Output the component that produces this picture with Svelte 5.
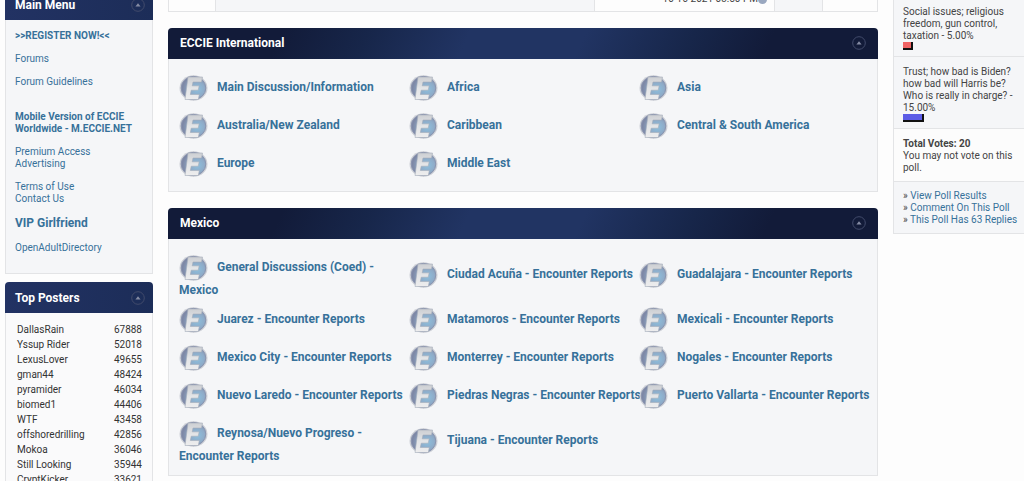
<script>
  const international = [
    'Main Discussion/Information', 'Africa', 'Asia',
    'Australia/New Zealand', 'Caribbean', 'Central & South America',
    'Europe', 'Middle East',
  ];
  const mexico = [
    'General Discussions (Coed) - Mexico', 'Ciudad Acuña - Encounter Reports', 'Guadalajara - Encounter Reports',
    'Juarez - Encounter Reports', 'Matamoros - Encounter Reports', 'Mexicali - Encounter Reports',
    'Mexico City - Encounter Reports', 'Monterrey - Encounter Reports', 'Nogales - Encounter Reports',
    'Nuevo Laredo - Encounter Reports', 'Piedras Negras - Encounter Reports', 'Puerto Vallarta - Encounter Reports',
    'Reynosa/Nuevo Progreso - Encounter Reports', 'Tijuana - Encounter Reports',
  ];
  const sections = [
    { title: 'ECCIE International', forums: international },
    { title: 'Mexico', forums: mexico },
  ];
  const posters = [
    ['DallasRain', 67888], ['Yssup Rider', 52018], ['LexusLover', 49655], ['gman44', 48424],
    ['pyramider', 46034], ['biomed1', 44406], ['WTF', 43458], ['offshoredrilling', 42856],
    ['Mokoa', 36046], ['Still Looking', 35944], ['CryptKicker', 33621],
  ];
</script>

{#snippet toggle(name)}
  <button class="toggle" aria-label="Collapse {name}">
    <svg width="14" height="14" viewBox="0 0 14 14">
      <circle cx="7" cy="7" r="6.3" fill="none" stroke="#424b6b" stroke-width="1" />
      <path d="M4.4 8.5 7 5.3l2.600 3.200z" fill="#858ca4" />
    </svg>
  </button>
{/snippet}

{#snippet badge()}
  <svg class="badge" width="29" height="30" viewBox="0 0 29 30" aria-hidden="true">
    <ellipse cx="14.5" cy="15" rx="14" ry="12.800" fill="#cccfd6" />
    <ellipse cx="14.5" cy="15" rx="12.300" ry="11.600" fill="url(#disc)" stroke="#8a94af" />
    <path d="M9 4h14.500l-1 5H14l-.8 3.800h7l-1 4.400h-7L11.300 21.500h9l-1 5H6z" fill="url(#metal)" stroke="#a5acbb" stroke-width=".6" />
  </svg>
{/snippet}

<svg class="defs" width="0" height="0" aria-hidden="true">
  <defs>
    <radialGradient id="disc" cx=".65" cy=".55" r=".6">
      <stop offset="0" stop-color="#8cc0de" />
      <stop offset=".5" stop-color="#8eabc8" />
      <stop offset="1" stop-color="#7d87a5" />
    </radialGradient>
    <linearGradient id="metal" x1="0" y1="0" x2="0" y2="1">
      <stop offset="0" stop-color="#cdcfd3" />
      <stop offset=".5" stop-color="#e3e5e7" />
      <stop offset="1" stop-color="#ededee" />
    </linearGradient>
  </defs>
</svg>

<div class="page">
  <aside class="left">
    <section>
      <header class="bar"><h2>Main Menu</h2>{@render toggle('Main Menu')}</header>
      <nav class="body menu">
        <p><a class="strong" href="#register">&gt;&gt;REGISTER NOW!&lt;&lt;</a></p>
        <p><a href="#forums">Forums</a></p>
        <p><a href="#guidelines">Forum Guidelines</a></p>
        <p class="spaced"><a class="strong" href="#mobile">Mobile Version of ECCIE Worldwide - M.ECCIE.NET</a></p>
        <p><a href="#premium">Premium Access</a><br /><a href="#ads">Advertising</a></p>
        <p><a href="#terms">Terms of Use</a><br /><a href="#contact">Contact Us</a></p>
        <p class="vip"><a class="strong" href="#vip">VIP Girlfriend</a></p>
        <p><a href="#directory">OpenAdultDirectory</a></p>
      </nav>
    </section>
    <section>
      <header class="bar"><h2>Top Posters</h2>{@render toggle('Top Posters')}</header>
      <div class="body posters">
        <table>
          <tbody>
            {#each posters as [name, count]}
              <tr><td>{name}</td><td class="count">{count}</td></tr>
            {/each}
          </tbody>
        </table>
      </div>
    </section>
  </aside>

  <main>
    <div class="last">
      <div></div>
      <div class="shade"></div>
      <div class="date"><span>10-16-2021 03:50 PM</span><i></i></div>
      <div class="shade"></div>
      <div></div>
    </div>
    {#each sections as section}
      <section>
        <header class="bar wide"><h2>{section.title}</h2>{@render toggle(section.title)}</header>
        <div class="body forums">
          {#each section.forums as forum}
            <div class="forum">{@render badge()}<a href="#forum">{forum}</a></div>
          {/each}
        </div>
      </section>
    {/each}
  </main>

  <aside class="poll">
    <div class="option">Social issues; religious freedom, gun control, taxation - 5.00%<span class="meter red"></span></div>
    <div class="option">Trust; how bad is Biden? how bad will Harris be? Who is really in charge? - 15.00%<span class="meter blue"></span></div>
    <div class="total"><b>Total Votes: 20</b><br />You may not vote on this poll.</div>
    <div class="links">
      » <a href="#results">View Poll Results</a><br />
      » <a href="#comment">Comment On This Poll</a><br />
      » <a href="#replies">This Poll Has 63 Replies</a>
    </div>
  </aside>
</div>

<style>
  :global(body) { background: #fdfdfd; }
  .defs { position: absolute; }
  .page {
    box-sizing: border-box;
    display: grid;
    grid-template-columns: 148px minmax(0, 1fr) 131px;
    gap: 15px;
    align-items: start;
    height: 100vh;
    overflow: hidden;
    padding-left: 5px;
    font: 10px/12px Roboto, sans-serif;
    color: #444;
  }
  a { color: #37719a; text-decoration: none; }
  .left { display: grid; gap: 8px; margin-top: -11px; }
  .bar {
    display: flex;
    align-items: center;
    justify-content: space-between;
    height: 31px;
    box-sizing: border-box;
    padding: 0 8px 0 10px;
    border-radius: 4px 4px 0 0;
    background: linear-gradient(90deg, #223263, #1c2d58);
  }
  .wide {
    padding: 0 12px 1px;
    background: linear-gradient(115deg, #121b39 16%, #17264a 28%, #213463 42%, #213463 58%, #17264a 73%, #121b39 84%);
  }
  h2 { margin: 0; font-size: 12px; line-height: 16px; font-weight: 700; color: #fff; }
  .toggle { display: flex; padding: 0; border: 0; background: none; }
  .body { background: #f5f6f8; border: 1px solid #e3e4e6; border-top: 0; }
  .menu { padding: 10px 9px 19px; }
  .menu p { margin: 0 0 11px; }
  .menu p.spaced { margin-top: 23px; }
  .menu .vip { font-size: 12px; line-height: 15px; }
  .menu p:last-child { margin: 0; }
  .strong { font-weight: 700; }
  .posters { padding: 9px 10px 0 11px; background: #fafafb; }
  table { width: 100%; border-collapse: collapse; }
  td { padding: 0; height: 15px; color: #333; }
  .count { text-align: right; }
  main { display: grid; gap: 16px; }
  .last {
    display: grid;
    grid-template-columns: 46px 1fr 180px 48px 55px;
    height: 12px;
    border: 1px solid #e3e4e6;
    border-top: 0;
    box-sizing: border-box;
    overflow: hidden;
  }
  .last > div + div { border-left: 1px solid #e3e4e6; }
  .shade { background: #f5f6f8; }
  .date { display: flex; justify-content: flex-end; padding-right: 7px; margin-top: -7px; }
  .date i { width: 9px; height: 9px; margin-top: 2px; border-radius: 50%; background: #9aa8c0; }
  .forums { display: grid; grid-template-columns: repeat(3, 1fr); padding: 9px 8px 9px 10px; }
  .forum { align-self: center; margin-right: -4px; padding: 5px 0 3px; font-size: 12px; line-height: 14px; font-weight: 700; }
  .badge { vertical-align: middle; margin-right: 9px; }
  .poll { border-left: 1px solid #e3e4e6; background: #f5f6f8; }
  .poll > div { padding: 9px 4px 7px 9px; border-bottom: 1px solid #e3e4e6; }
  .poll > .option { padding-bottom: 6px; }
  .poll > .option:first-child { padding-top: 6px; }
  .poll > .total { background: #fcfcfc; }
  .poll > .links { padding-top: 8px; }
  .meter { display: block; box-sizing: border-box; height: 8px; border: solid #111; border-width: 0 2px 2px 0; }
  .red { width: 10px; background: #f06464; }
  .blue { width: 21px; background: #5c5ce6; }
</style>
